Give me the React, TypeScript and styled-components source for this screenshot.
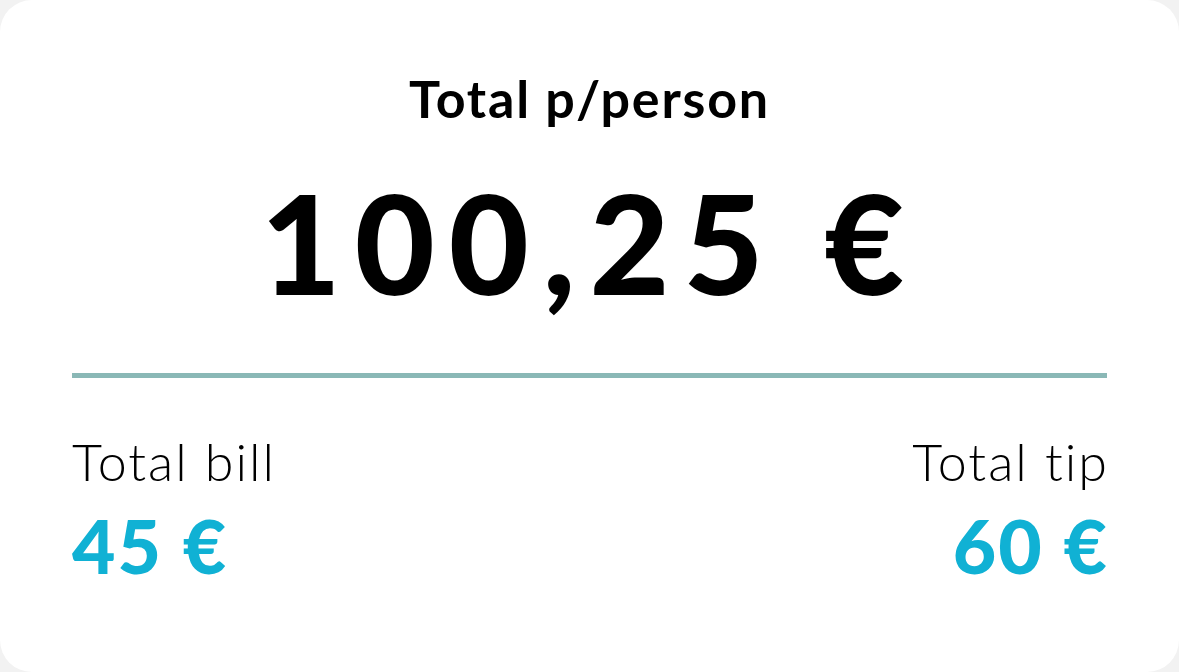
import React from 'react';
import styled, { createGlobalStyle } from 'styled-components';

const GlobalStyle = createGlobalStyle`
  html, body {
    margin: 0;
    padding: 0;
    background: #f2f2f2;
  }
  body {
    font-family: Lato, "Noto Sans", sans-serif;
  }
`;

const Card = styled.div`
  box-sizing: border-box;
  width: 1179px;
  height: 672px;
  background: #ffffff;
  border-radius: 32px;
  padding: 66px 72px 0;
  display: flex;
  flex-direction: column;
`;

const Heading = styled.h2`
  margin: 0;
  text-align: center;
  font-size: 52px;
  font-weight: 700;
  line-height: 64px;
  letter-spacing: 1.8px;
  color: #000;
`;

const Amount = styled.div`
  margin-top: 37px;
  text-align: center;
  font-size: 138px;
  font-weight: 900;
  line-height: 150px;
  letter-spacing: 14px;
  color: #000;
`;

const Divider = styled.hr`
  margin: 56px 0 0;
  border: none;
  height: 5px;
  background: #8ab8b6;
`;

const Summary = styled.div`
  margin-top: 53px;
  display: flex;
  justify-content: space-between;
`;

const Column = styled.div<{ align: 'left' | 'right' }>`
  display: flex;
  flex-direction: column;
  align-items: ${({ align }) => (align === 'left' ? 'flex-start' : 'flex-end')};
  margin-right: ${({ align }) => (align === 'right' ? '-2px' : '0')};
`;

const Label = styled.span`
  font-size: 52px;
  font-weight: 300;
  line-height: 60px;
  letter-spacing: 2px;
  color: #000;
`;

const Value = styled.span`
  margin-top: 14px;
  font-size: 75px;
  font-weight: 900;
  line-height: 80px;
  letter-spacing: 2px;
  color: #10b1d4;
`;

export default function App() {
  return (
    <>
      <GlobalStyle />
      <Card>
        <Heading>Total p/person</Heading>
        <Amount>100,25 €</Amount>
        <Divider />
        <Summary>
          <Column align="left">
            <Label>Total bill</Label>
            <Value>45 €</Value>
          </Column>
          <Column align="right">
            <Label>Total tip</Label>
            <Value>60 €</Value>
          </Column>
        </Summary>
      </Card>
    </>
  );
}
